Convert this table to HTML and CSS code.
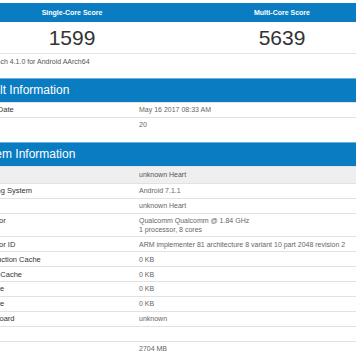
FILE: index.html
```html
<!DOCTYPE html>
<html lang="en">
<head>
  <meta charset="UTF-8" />
  <title>Geekbench Result</title>
  <link rel="stylesheet" href="styles.css">
</head>
<body>
  <div class="page">
    <div class="scores">
      <div class="score-head">Single-Core Score</div>
      <div class="score-head">Multi-Core Score</div>
      <div class="score">1599</div>
      <div class="score">5639</div>
    </div>
    <div class="caption">Geekbench 4.1.0 for Android AArch64</div>

    <div class="section">
      <div class="section-head">Result Information</div>
      <div class="rows">
        <div class="row"><div class="label">Upload Date</div><div class="value">May 16 2017 08:33 AM</div></div>
        <div class="row"><div class="label">Views</div><div class="value">20</div></div>
      </div>
    </div>

    <div class="section">
      <div class="section-head">System Information</div>
      <div class="rows">
        <div class="row system"><div class="label"></div><div class="value">unknown Heart</div></div>
        <div class="row"><div class="label">Operating System</div><div class="value">Android 7.1.1</div></div>
        <div class="row"><div class="label">Model</div><div class="value">unknown Heart</div></div>
        <div class="row"><div class="label">Processor</div><div class="value">Qualcomm Qualcomm @ 1.84 GHz<br>1 processor, 8 cores</div></div>
        <div class="row"><div class="label">Processor ID</div><div class="value">ARM implementer 81 architecture 8 variant 10 part 2048 revision 2</div></div>
        <div class="row"><div class="label">L1 Instruction Cache</div><div class="value">0 KB</div></div>
        <div class="row"><div class="label">L1 Data Cache</div><div class="value">0 KB</div></div>
        <div class="row"><div class="label">L2 Cache</div><div class="value">0 KB</div></div>
        <div class="row"><div class="label">L3 Cache</div><div class="value">0 KB</div></div>
        <div class="row"><div class="label">Motherboard</div><div class="value">unknown</div></div>
        <div class="row"><div class="label">BIOS</div><div class="value"></div></div>
        <div class="row"><div class="label">Memory</div><div class="value">2704 MB</div></div>
      </div>
    </div>
  </div>
</body>
</html>
```

FILE: styles.css
```css
* {
  box-sizing: border-box;
}

html, body {
  margin: 0;
  padding: 0;
  overflow: hidden;
  background: #fff;
}

body {
  font-family: 'Liberation Sans', Arial, sans-serif;
  color: #333;
}

.page {
  width: 426px;
  margin: 3px 0 0 -36px;
}

.scores {
  display: grid;
  grid-template-columns: 210px 210px;
  margin-left: 3px;
  border-bottom: 1px solid #e4e4e4;
}

.score-head {
  background-color: #0a7cc1;
  color: #fff;
  font-weight: bold;
  font-size: 7px;
  line-height: 9px;
  padding: 5px 0;
  text-align: center;
}

.score {
  font-size: 21px;
  line-height: 31px;
  text-align: center;
  color: #333;
}

.caption {
  font-size: 7px;
  line-height: 9px;
  color: #555;
  padding: 3px 8px 0;
  margin-bottom: 12px;
}

.section {
  margin-bottom: 10px;
}

.section-head {
  background-color: #0a7cc1;
  border-top: 1px solid #6fb0dc;
  color: #fff;
  font-size: 12px;
  line-height: 12px;
  padding: 5px 8px 6px;
}

.rows {
  border-top: 1px solid #e2e2e2;
}

.row {
  display: grid;
  grid-template-columns: 167px 1fr;
  border-bottom: 1px solid #e2e2e2;
}

.row:last-child {
  border-bottom: none;
}

.label, .value {
  padding: 2.45px 8px;
  line-height: 9px;
}

.label {
  font-size: 7.5px;
  color: #333;
}

.value {
  font-size: 7px;
  color: #666;
}

.row.system {
  background-color: #efefef;
}

.row.system .label, .row.system .value {
  padding-top: 3.5px;
  padding-bottom: 3.5px;
}

.row.system .value {
  color: #555;
}
```
